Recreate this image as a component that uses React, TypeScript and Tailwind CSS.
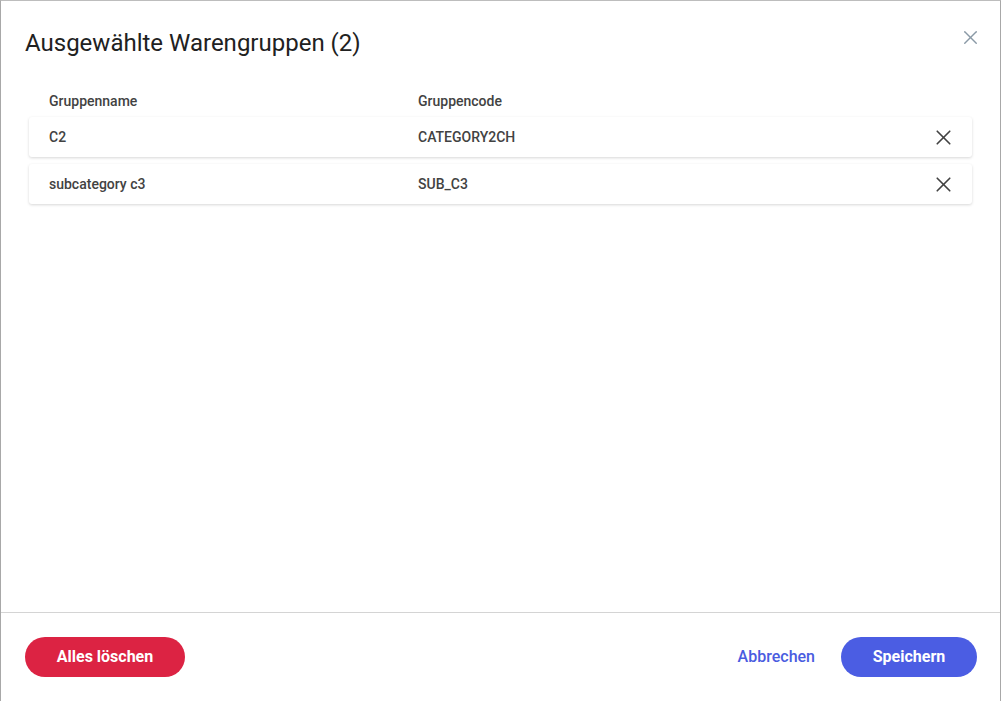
import { X } from "lucide-react";

interface Group {
  name: string;
  code: string;
}

const groups: Group[] = [
  { name: "C2", code: "CATEGORY2CH" },
  { name: "subcategory c3", code: "SUB_C3" },
];

export default function App() {
  return (
    <div
      className="w-[1002px] h-[701px] bg-white overflow-hidden"
      style={{ fontFamily: "Roboto, 'Noto Sans', sans-serif" }}
    >
      <div className="w-[1001px] h-[701px] flex flex-col border-l-[1.5px] border-r-[1.5px] border-t border-[#a8a8a8] border-t-[#bdbdbd]">
        <div className="flex-1 flex flex-col">
          <div className="flex items-start justify-between pl-6 pr-[18px] pt-[27px]">
            <h2 className="text-[24px] leading-[30px] text-[#212121]">
              Ausgewählte Warengruppen (2)
            </h2>
            <button className="-mt-[2px] text-[#8a99a6]">
              <X size={23} strokeWidth={1.5} />
            </button>
          </div>

          <div className="px-7 mt-[35px]">
            <div className="flex pl-[20px] text-[14px] font-medium text-[#424242] leading-[16px]">
              <div className="w-[369px]">Gruppenname</div>
              <div>Gruppencode</div>
            </div>
            <div className="mt-[8px] flex flex-col gap-[7px]">
              {groups.map((g) => (
                <div
                  key={g.code}
                  className="h-[40px] flex items-center pl-[20px] pr-[16px] rounded-[3px] bg-white shadow-[0_1px_3px_rgba(0,0,0,0.16)] text-[14px] font-medium text-[#424242]"
                >
                  <div className="w-[369px]">{g.name}</div>
                  <div className="flex-1">{g.code}</div>
                  <button className="text-[#424242]">
                    <X size={25} strokeWidth={1.6} />
                  </button>
                </div>
              ))}
            </div>
          </div>
        </div>

        <div className="h-[89px] border-t-[1.5px] border-[#d4d4d4] flex items-center justify-between pl-6 pr-[23px] pb-[1px]">
          <button className="h-[40px] w-[160px] rounded-full bg-[#dc2343] text-white text-[16px] font-bold">
            Alles löschen
          </button>
          <div className="flex items-center">
            <button className="text-[16px] font-medium text-[#4a5ce0] mr-[26px]">
              Abbrechen
            </button>
            <button className="h-[40px] w-[136px] rounded-full bg-[#4b5de3] text-white text-[16px] font-bold">
              Speichern
            </button>
          </div>
        </div>
      </div>
    </div>
  );
}
